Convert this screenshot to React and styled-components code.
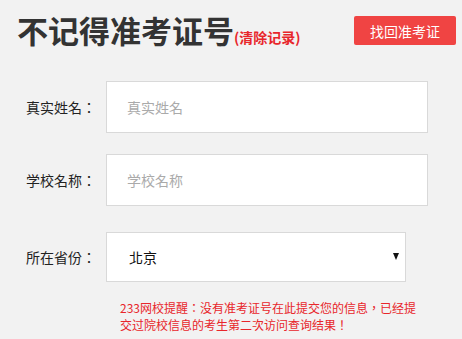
import React from "react";
import styled, { createGlobalStyle } from "styled-components";

const GlobalStyle = createGlobalStyle`
  body {
    margin: 0;
    background: #f2f2f2;
    font-family: "Noto Sans CJK TC", "Noto Sans CJK SC", "Noto Sans", sans-serif;
  }
`;

const Page = styled.div`
  width: 462px;
  height: 339px;
  padding: 10px 6px 0 17px;
  box-sizing: border-box;
  overflow: hidden;
`;

const Header = styled.div`
  display: flex;
  justify-content: space-between;
  align-items: flex-start;
  height: 42px;
`;

const Title = styled.h1`
  margin: 0;
  font-family: "Noto Sans CJK SC", sans-serif;
  font-size: 31px;
  line-height: 40px;
  font-weight: 700;
  color: #333;
  display: flex;
  align-items: baseline;
`;

const Clear = styled.span`
  font-size: 14px;
  font-weight: 700;
  color: #e8262b;
  cursor: pointer;
`;

const FindButton = styled.button`
  margin-top: 6px;
  width: 102px;
  height: 29px;
  border: none;
  border-radius: 2px;
  background: #f04443;
  color: #fff;
  font-family: inherit;
  font-size: 14px;
  padding: 0;
`;

const Form = styled.div`
  margin-top: 29px;
  padding-left: 9px;
  display: flex;
  flex-direction: column;
`;

const Row = styled.div`
  display: flex;
  align-items: center;
  margin-bottom: ${(p) => p.$gap}px;
`;

const Label = styled.label`
  width: 80px;
  font-size: 14px;
  color: #222;
`;

const Input = styled.input`
  width: 322px;
  height: 52px;
  box-sizing: border-box;
  border: 1px solid #d9d9d9;
  background: #fff;
  padding: 0 20px;
  font-family: inherit;
  font-size: 14px;
  color: #333;
  outline: none;
  &::placeholder {
    color: #aaa;
  }
`;

const SelectBox = styled.div`
  position: relative;
  width: 300px;
  height: 50px;
  box-sizing: border-box;
  border: 1px solid #d9d9d9;
  background: #fff;
  display: flex;
  align-items: center;
  padding-left: 22px;
  font-size: 14px;
  color: #111;
`;

const Arrow = styled.span`
  position: absolute;
  right: 6px;
  top: 20px;
  width: 0;
  height: 0;
  border-left: 3.5px solid transparent;
  border-right: 3.5px solid transparent;
  border-top: 7px solid #111;
`;

const Notice = styled.p`
  margin: 17px 0 0 94px;
  max-width: 300px;
  font-size: 12px;
  line-height: 17px;
  color: #e8262b;
`;

export default function App() {
  return (
    <Page>
      <GlobalStyle />
      <Header>
        <Title>
          不记得准考证号<Clear>(清除记录)</Clear>
        </Title>
        <FindButton>找回准考证</FindButton>
      </Header>
      <Form>
        <Row $gap={21}>
          <Label>真实姓名：</Label>
          <Input placeholder="真实姓名" />
        </Row>
        <Row $gap={26}>
          <Label>学校名称：</Label>
          <Input placeholder="学校名称" />
        </Row>
        <Row $gap={0}>
          <Label>所在省份：</Label>
          <SelectBox>
            北京
            <Arrow />
          </SelectBox>
        </Row>
        <Notice>
          233网校提醒：没有准考证号在此提交您的信息，已经提交过院校信息的考生第二次访问查询结果！
        </Notice>
      </Form>
    </Page>
  );
}
